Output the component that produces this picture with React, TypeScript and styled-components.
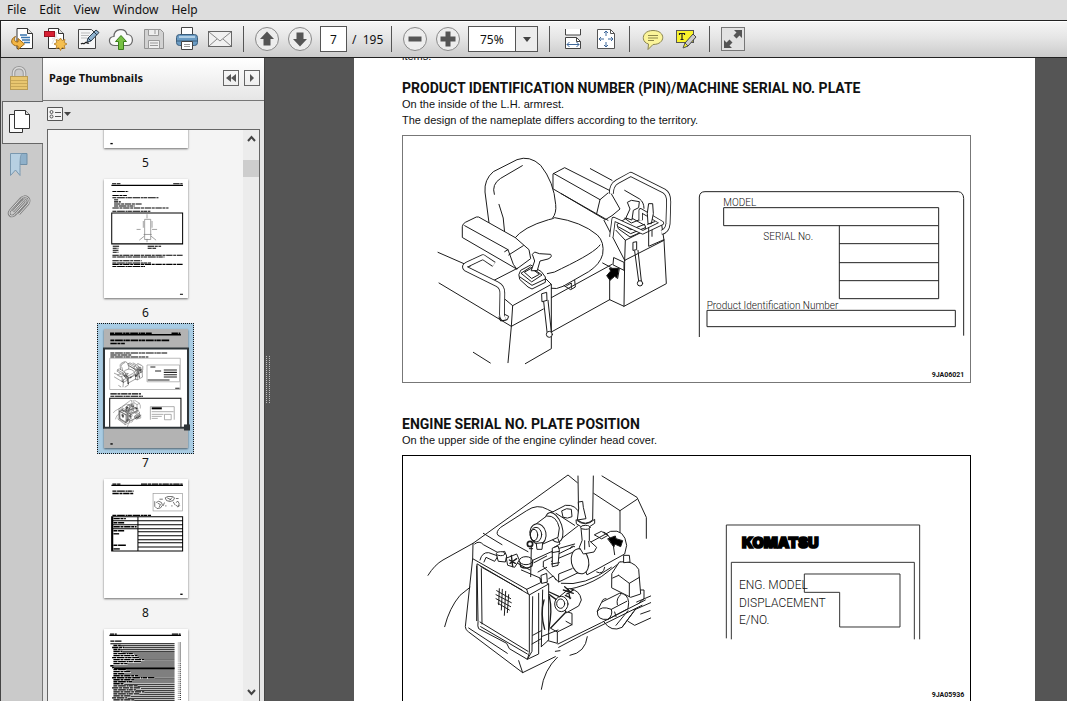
import React, { useLayoutEffect, useRef } from "react";
import styled, { createGlobalStyle, css } from "styled-components";

const GlobalStyle = createGlobalStyle`
  * { box-sizing: border-box; }
  html, body, #root { height: 100%; }
  body { margin: 0; overflow: hidden; font-family: "Noto Sans", "Open Sans", sans-serif; font-size: 12px; color: #111; }
  button, input, select { font: inherit; color: inherit; }
  button { background: none; border: 0; padding: 0; cursor: default; }
`;

const Window = styled.div`
  height: 100%;
  display: flex;
  flex-direction: column;
  background: #dcdcdc;
`;

const MenuBar = styled.nav`
  flex: none;
  display: flex;
  height: 20px;
  padding-left: 1px;
  background: #dddddd;
`;

const MenuItem = styled.button`
  padding: 0 7px 0 6px;
  line-height: 20px;
`;

const Toolbar = styled.div`
  flex: none;
  display: flex;
  align-items: center;
  height: 38px;
  padding-left: 4px;
  border: 1px solid #222;
  border-width: 1px 0 1px 1px;
  background: linear-gradient(#f6f6f6, #e6e6e6 45%, #cbcbcb);
  box-shadow: inset 0 1px #fff;
`;

const ToolButton = styled.button`
  flex: none;
  width: 33px;
  height: 30px;
  display: grid;
  place-items: center;
`;

const Separator = styled.span`
  flex: none;
  width: 1px;
  height: 26px;
  margin: 0 6px 0 7px;
  background: #555;
`;

const fieldFrame = css`
  flex: none;
  height: 26px;
  margin: 0 4px;
  border: 1px solid #555;
  background: #fff;
`;

const PageInput = styled.input`
  ${fieldFrame}
  width: 27px;
  padding: 0;
  border-radius: 0;
  text-align: center;
`;

const PageCount = styled.span`
  width: 33px;
  padding-left: 1px;
  white-space: pre;
`;

const ZoomField = styled.label`
  ${fieldFrame}
  width: 70px;
  display: flex;
  align-items: stretch;
`;

const ZoomSelect = styled.select`
  flex: 1;
  min-width: 0;
  padding: 0 0 0 11px;
  border: 0;
  border-radius: 0;
  appearance: none;
  background: transparent;
`;

const ZoomArrow = styled.span`
  width: 22px;
  display: grid;
  place-items: center;
  border-left: 1px solid #555;
  background: #ececec;
  pointer-events: none;
`;

const Workspace = styled.div`
  flex: 1;
  min-height: 0;
  display: flex;
  border-left: 1px solid #444;
`;

const Rail = styled.div`
  flex: none;
  width: 42px;
  display: flex;
  flex-direction: column;
  background: #cacaca;
  border-right: 1px solid #777;
`;

const RailTab = styled.button<{ $active?: boolean }>`
  flex: none;
  height: 43px;
  padding: 0 5px 3px 0;
  display: grid;
  place-items: center;
  ${(p) =>
    p.$active &&
    css`
      margin: 0 -1px 0 1px;
      padding-right: 7px;
      background: #e6e6e6;
      border: 1px solid #666;
      border-right: 0;
    `}
`;

const SidePanel = styled.aside`
  flex: none;
  width: 221px;
  display: flex;
  flex-direction: column;
  background: #e5e5e5;
`;

const PanelHeader = styled.header`
  flex: none;
  display: flex;
  align-items: center;
  gap: 5px;
  height: 43px;
  padding: 0 4px 3px 6px;
  border-bottom: 1px solid #777;
  background: linear-gradient(#fff, #e6e6e6);
`;

const PanelTitle = styled.h2`
  flex: 1;
  margin: 0;
  font-size: 11px;
  font-weight: 700;
  white-space: nowrap;
`;

const SquareButton = styled.button`
  width: 16px;
  height: 16px;
  display: grid;
  place-items: center;
  border: 1px solid #666;
`;

const PanelTools = styled.div`
  flex: none;
  height: 28px;
  padding: 6px 4px;
`;

const ThumbArea = styled.div`
  flex: 1;
  min-height: 0;
  display: flex;
  margin: 0 4px;
  border: 1px solid #666;
  border-bottom: 0;
  background: #f4f4f4;
`;

const ThumbList = styled.div`
  flex: 1;
  overflow: hidden;
`;

const ThumbItem = styled.div`
  display: flex;
  flex-direction: column;
  align-items: center;
`;

const ThumbFrame = styled.button<{ $selected?: boolean }>`
  width: 97px;
  height: 131px;
  display: grid;
  place-items: center;
  border: 1px dotted transparent;
  ${(p) => p.$selected && css`background: #a9cce3; border-color: #111;`}
`;

const Paper = styled.svg`
  width: 84px;
  height: 119px;
  overflow: visible;
  background: #fff;
  box-shadow: 0 1px 2px rgba(0, 0, 0, 0.55);
`;

const ThumbLabel = styled.span`
  height: 19px;
  line-height: 17px;
`;

const ScrollBar = styled.div`
  flex: none;
  width: 16px;
  display: flex;
  flex-direction: column;
  align-items: center;
  background: #ececec;
`;

const ScrollArrow = styled.button`
  width: 16px;
  height: 17px;
  display: grid;
  place-items: center;
`;

const ScrollTrack = styled.div`
  flex: 1;
  width: 16px;
  padding-top: 13px;
`;

const ScrollThumb = styled.div`
  height: 17px;
  background: #cdcdcd;
`;

const Splitter = styled.div`
  flex: none;
  width: 7px;
  display: grid;
  align-items: center;
  justify-items: center;
  background: #555;
  border-left: 1px solid #444;
`;

const Reader = styled.main`
  flex: 1;
  min-width: 0;
  overflow: hidden;
  padding: 0 32px 0 83px;
  background: #555;
`;

const Sheet = styled.article`
  padding: 100px 64px 60px 48px;
  background: #fff;
  font-family: Roboto, "Liberation Sans", Arial, sans-serif;
`;

const Paragraph = styled.p`
  margin: 0;
  font-size: 12px;
  font-family: "Liberation Sans", Arial, sans-serif;
  font-size: 11px;
  line-height: 16px;
  color: #111;
`;

const Heading = styled.h1`
  margin: 16px 0 0;
  font-size: 14px;
  line-height: 16px;
  font-weight: 700;
  white-space: nowrap;
`;

const Figure = styled.figure<{ $tone: string }>`
  margin: 7px 0 33px;
  border: 1px solid ${(p) => p.$tone};
  svg { display: block; width: 100%; height: auto; }
`;

const Drawing = styled.g<{ $weight: number }>`
  fill: none;
  stroke: #1c1c1c;
  stroke-width: ${(p) => p.$weight};
  stroke-linejoin: round;
  stroke-linecap: round;
  .w { fill: #fff; }
  .k { fill: #000; }
`;

const PlateText = styled.text<{ $size: number; $bold?: boolean }>`
  font-family: Roboto, "Liberation Sans", sans-serif;
  font-size: ${(p) => p.$size}px;
  font-weight: ${(p) => (p.$bold ? 700 : 300)};
  fill: #111;
`;

const Wordmark = styled.text`
  font-family: Inter, sans-serif;
  font-size: 44px;
  font-weight: 900;
  fill: #000;
  stroke: #000;
  stroke-width: 5;
`;

const Tube = ({ d, w = 15 }: { d: string; w?: number }) => (
  <>
    <path d={d} strokeWidth={w} strokeLinecap="butt" />
    <path d={d} strokeWidth={w - 5} stroke="#fff" strokeLinecap="butt" />
  </>
);

/* ---------- toolbar icons ---------- */

const Icon = ({ children, size = 26 }: { children: React.ReactNode; size?: number }) => (
  <svg width={size} height={size} viewBox={`0 0 ${size} ${size}`} fill="none" aria-hidden="true">
    {children}
  </svg>
);

const OpenIcon = () => (
  <Icon>
    <path d="M8 2.5h10.500l5 5v15H8z" fill="#fff" stroke="#333" />
    <path d="M18.500 2.500v5h5" fill="#ddd" stroke="#333" />
    <path d="M11 9h7M12 11.500h9M13 14h8M15 16.500h6" stroke="#3a76b0" strokeWidth="1.300" />
    <path d="M6.500 10.500C1 12.500 1 20 9 20v3.500l6.500-5.500L9 12.500V16c-4 0-4.500-3-2.500-5.500z" fill="#f2b544" stroke="#9a6716" />
  </Icon>
);
const CreateIcon = () => (
  <Icon>
    <path d="M6.500 2.500h10l5 5v15h-15z" fill="#fff" stroke="#333" />
    <path d="M16.500 2.500v5h5" fill="#ddd" stroke="#333" />
    <path d="M10 13c4-1 5-5 4-7-1 5 2 8 6 8M10 18l4-8" stroke="#ddd" />
    <rect x="2.500" y="5.500" width="10" height="5" fill="#d81f33" stroke="#9b1220" />
    <path d="m18.500 12 1.500 2.500 3-1-.8 3 2.800 1.500-2.800 1.500.8 3-3-.8-1.500 2.800-1.500-2.800-3 .8.800-3L12 18l2.800-1.500-.8-3 3 1z" fill="#f5bf4f" stroke="#b0791f" strokeWidth=".8" />
  </Icon>
);
const SignIcon = () => (
  <Icon>
    <path d="M3.500 3.500h13l4 4v15h-17z" fill="#f6f6f6" stroke="#444" />
    <path d="M6 7h9M6 9.500h8M6 12h6" stroke="#bbb" />
    <path d="M6 18c2-2 3 1 4-1s2 1 4 0" stroke="#222" strokeWidth="1.300" />
    <path d="m12 16 1-4 8-8 3 2.500-8 8.500z" fill="#8fb2cf" stroke="#2c3c4b" />
    <path d="m13 12 3 3M19 6l3 3" stroke="#2c3c4b" />
  </Icon>
);
const CloudIcon = () => (
  <Icon>
    <path d="M7 19.500c-7 0-7.500-9-1-9 0-8 11-9.500 13-2 7 0 7.500 11 0 11z" fill="#fafafa" stroke="#666" strokeWidth="1.200" />
    <path d="m13 9.500 5.500 6H15.500v8h-5v-8H7.500z" fill="#78c043" stroke="#3b7f1b" />
  </Icon>
);
const SaveIcon = () => (
  <Icon>
    <path d="M3.500 3.500h16l3 3v16h-19z" fill="#d2d2d2" stroke="#929292" />
    <path d="M7.500 3.500h10v6h-10zM7.500 14.500h11v8h-11z" fill="#eee" stroke="#999" />
    <path d="M14 4v4M9 17h8M9 19.500h8" stroke="#999" />
  </Icon>
);
const PrintIcon = () => (
  <Icon>
    <path d="M7.500 9V1.500h11V9" fill="#fff" stroke="#444" />
    <rect x="2.500" y="8.500" width="21" height="11" rx="3" fill="#6b9cc4" stroke="#3d5f7d" />
    <path d="M3 15h20" stroke="#3d5f7d" />
    <path d="M5 11h16" stroke="#b2d0e6" strokeWidth="2" />
    <path d="M7.500 15.500h11v8h-11z" fill="#fff" stroke="#444" />
    <path d="M10 18.500h6M10 20.500h6" stroke="#999" />
  </Icon>
);
const MailIcon = () => (
  <Icon>
    <rect x="1.500" y="5.500" width="23" height="15" fill="#f1f1f1" stroke="#666" />
    <path d="m2 6 11 9 11-9M2 20l8-7M24 20l-8-7" stroke="#888" />
  </Icon>
);
const RoundIcon = ({ d }: { d: string }) => (
  <Icon>
    <circle cx="13" cy="13" r="11.500" fill="#ededed" stroke="#888" />
    <path d={d} fill="#555" />
  </Icon>
);
const FitWidthIcon = () => (
  <Icon>
    <path d="M5.500 3v6h15V3" fill="#fff" stroke="#444" />
    <path d="M5.500 22.500v-11h11l4 4v7z" fill="#fff" stroke="#444" />
    <path d="M16.500 11.500v4h4" stroke="#444" />
    <path d="M7 18.500h12M9.500 16 7 18.500 9.500 21M16.500 16l2.500 2.500-2.500 2.500" stroke="#3f689a" />
  </Icon>
);
const FitPageIcon = () => (
  <Icon>
    <path d="M4.500 3.500h13l4 4v15h-17z" fill="#fff" stroke="#555" />
    <path d="M17.500 3.500v4h4" stroke="#555" />
    <path d="M13 5v5M13 16v5M6 13h5M15 13h5M11 7l2-2 2 2M11 19l2 2 2-2M8 11l-2 2 2 2M18 11l2 2-2 2" stroke="#3f689a" />
  </Icon>
);
const CommentIcon = () => (
  <Icon>
    <path d="M13 4.500c13 0 13 14 0 14l-5 5 .500-5.500C.500 16 1.500 4.500 13 4.500z" fill="#fbf49a" stroke="#8a8550" />
    <path d="M8 9.500h10M8 12h10M8 14.500h6" stroke="#8d874b" />
  </Icon>
);
const HighlightIcon = () => (
  <Icon>
    <rect x="3.500" y="4.500" width="17" height="12" fill="#f9f32c" stroke="#555" />
    <path d="M6 7.500h6M9 7.500v6M7.500 13.500h3M6.500 7v2M11.500 7v2" stroke="#222" strokeWidth="1.200" />
    <path d="m11 21 1-4 8-9 3 3-8 9z" fill="#ccc" stroke="#444" />
    <path d="m10 22 2-5 3 3z" fill="#f9f32c" stroke="#555" />
  </Icon>
);
const ExpandIcon = () => (
  <Icon>
    <rect x="1.500" y="1.500" width="23" height="23" fill="#e2e2e2" stroke="#777" />
    <path d="M22 4v8l-2.500-2.500-3 3-3-3 3-3L14 4zM4 22v-8l2.500 2.500 3-3 3 3-3 3L12 22z" fill="#555" />
  </Icon>
);

/* ---------- rail icons ---------- */

const LockIcon = () => (
  <Icon>
    <path d="M7.500 12V8c0-7 11-7 11 0v4" stroke="#999" strokeWidth="3.500" />
    <path d="M7.500 12V8c0-7 11-7 11 0v4" stroke="#ddd" strokeWidth="1.500" />
    <rect x="4.500" y="11.500" width="17" height="13" fill="#e8c66f" stroke="#b99c56" />
    <path d="M5 15.500h16M5 18.500h16M5 21.500h16" stroke="#c9a857" />
  </Icon>
);
const PagesIcon = () => (
  <Icon>
    <path d="M2.500 6.500h13v18h-13z" fill="#fafafa" stroke="#333" />
    <path d="M7.500 2.500h11l4 4v14h-15z" fill="#fff" stroke="#333" />
    <path d="M18.500 2.500v4h4" fill="#ddd" stroke="#333" />
  </Icon>
);
const BookmarkIcon = () => (
  <Icon>
    <path d="M13 2.500h8v11h-7z" fill="#8fb0c9" stroke="#6f8fa6" />
    <path d="M4.500 24.500V2.500H16c-2 2-2 6-2 22L9.500 19z" fill="#b7d0e2" stroke="#7a98af" />
  </Icon>
);
const ClipIcon = () => (
  <Icon>
    <path d="M7 17.500 17 6.500c2-2 4 .500 2.500 2.500L9 20.500C5 24.500 1 20 4.500 16L15 4.500c4-4.500 11 0 7 5.500l-9 10" stroke="#808080" strokeWidth="2.600" />
    <path d="M7 17.500 17 6.500c2-2 4 .500 2.500 2.500L9 20.500C5 24.500 1 20 4.500 16L15 4.500c4-4.500 11 0 7 5.500l-9 10" stroke="#ddd" />
  </Icon>
);

/* ---------- thumbnails ---------- */

/* Each row: x start, x end, y. Rows are drawn as broken bars that read as tiny words. */
type Row = [number, number, number];
const Rows = ({ rows, w = 4 }: { rows: Row[]; w?: number }) => (
  <g stroke="#000" strokeWidth={w}>
    {rows.map(([a, b, y], i) => (
      <path key={i} d={`M${a} ${y}H${b}`} strokeDasharray={i % 2 ? "19 2 9 2" : "12 2 23 2 6 1"} />
    ))}
  </g>
);

const Thumb5 = () => <Rows rows={[[19, 26, 341]]} />;

const Thumb6 = () => (
  <>
    <path d="M22 19H235" stroke="#000" strokeWidth="4" />
    <Rows rows={[[24, 49, 14], [206, 234, 14], [25, 72, 37], [25, 68, 49], [25, 162, 56], [30, 42, 62], [30, 50, 68], [30, 112, 74], [30, 92, 80], [25, 192, 86], [25, 138, 96], [26, 46, 200], [26, 43, 206], [26, 43, 212], [26, 43, 218], [130, 170, 200], [130, 155, 206], [25, 234, 227], [25, 180, 232], [25, 112, 243], [25, 140, 250], [25, 234, 254], [25, 122, 260], [226, 235, 343]]} w={3} />
    <path d="M23 101H234V193H23Z" fill="none" stroke="#000" strokeWidth="3" />
    <path d="M121 120h18v60h-18zM117 125v20M143 125v20M97 150h12M143 150h15M105 182l15-12M155 182l-15-12M128 105v12M128 188v-10M118 165h24" fill="none" stroke="#777" strokeWidth="2" />
  </>
);

const Thumb7 = () => (
  <>
    <path d="M0 0H250V58H0ZM0 296H250V354H0Z" fill="#b3b3b3" />
    <path d="M18 17H229" stroke="#000" strokeWidth="4" />
    <Rows rows={[[18, 142, 13], [201, 227, 13], [19, 196, 34], [19, 62, 43]]} w={5} />
    <Rows rows={[[19, 188, 71], [19, 82, 77], [19, 132, 83], [19, 110, 193], [19, 116, 200]]} w={3} />
    <path d="M17 87H227V180H17ZM128 107H225V157H128Z" fill="#fff" stroke="#999" strokeWidth="2" />
    <path d="M178 122h39M178 129h39M178 136h39M178 143h39M138 113h15M152 125h18M130 152h65M212 176h13" stroke="#222" strokeWidth="3" />
    <path d="M17 293V206H229V293" fill="none" stroke="#000" strokeWidth="3" />
    <path d="M138 270V231H209V270M142 246h65M142 254h35M142 260h30M142 266h18M180 254h20v16h-20z" fill="none" stroke="#888" strokeWidth="2" />
    <path d="M142 236h30" stroke="#000" strokeWidth="6" />
    <g transform="translate(15 87) scale(0.122)"><SeatLines weight={10} /></g>
    <g transform="translate(16 203) scale(0.122)"><EngineLines weight={8} /></g>
    <path d="M0 58H250V294H0Z" fill="none" stroke="#2d3438" strokeWidth="6" />
    <path d="M238 284h18v18h-18z" fill="#2d3438" />
    <Rows rows={[[19, 26, 342]]} />
  </>
);

const Thumb8 = () => (
  <>
    <path d="M22 19H235" stroke="#000" strokeWidth="4" />
    <Rows rows={[[25, 49, 15], [110, 234, 15], [25, 88, 36], [25, 88, 43], [25, 140, 108], [28, 65, 118], [28, 60, 130], [28, 97, 142], [28, 60, 154], [28, 45, 163], [28, 65, 197], [28, 48, 208], [227, 234, 343]]} w={4} />
    <path d="M23 112H234V214H23ZM101 112V214M101 124H234M101 136H234M101 148H234M101 157H234M101 169H234M101 181H234M101 190H234M101 202H234M23 124H101M23 136H101M23 148H101" fill="none" stroke="#000" strokeWidth="3" />
    <path d="M25 112V214" stroke="#000" strokeWidth="5" />
    <rect x="146" y="43" width="88" height="52" fill="#fff" stroke="#999" strokeWidth="2" />
    <path d="M151 66v16M155 70l8-4 8 4 3 8-6 8-10 2-6-6M160 72l8 4-4 8M182 56l8-4h14l6 4-4 8-10 3-10-3zM188 56l12 6M204 54l-10 10M180 70l-4 10M206 68l6 10M214 70l6-4 4 8-4 8-6-4M220 84l6-6M182 80h4M200 80h4M165 60h10M214 58h8" fill="none" stroke="#333" strokeWidth="2" />
  </>
);

const contentsStarts = [50, 60, 48, 55, 90, 100, 104, 120, 110, 70, 19, 30, 66, 80, 60, 102, 150, 90, 84, 60, 100, 110, 95, 120, 105, 80, 70, 90];

const Thumb9 = () => (
  <>
    <path d="M16 19H229" stroke="#000" strokeWidth="4" />
    <Rows rows={[[18, 38, 15], [202, 228, 15], [19, 52, 36]]} />
    <path d="M19 44H210" stroke="#000" strokeWidth="3" />
    <Rows rows={contentsStarts.map((x, i): Row => [i % 5 === 1 ? 24 : 28, x, 49 + i * 6])} w={4} />
    <g stroke="#000" strokeWidth="3">
      {contentsStarts.map((x, i) => <path key={i} d={`M${x} ${50 + i * 6}H210`} />)}
    </g>
    <path d="M227 40V220" stroke="#333" strokeWidth="4" strokeDasharray="3 3" />
    <path d="M222 40V220" stroke="#aaa" strokeWidth="5" strokeDasharray="3 3" />
    <path d="M30 117H210" stroke="#000" strokeWidth="5" />
  </>
);

const thumbs = [
  { n: 5, art: <Thumb5 /> },
  { n: 6, art: <Thumb6 /> },
  { n: 7, art: <Thumb7 /> },
  { n: 8, art: <Thumb8 /> },
  { n: 9, art: <Thumb9 /> },
];

/* ---------- figure drawings ---------- */

function SeatLines({ weight = 3 }: { weight?: number }) {
  return (
    <Drawing $weight={weight}>
      {/* back rest and cushion */}
      <path d="M283 278 L271 185 Q268 148 296 124 L367 88 Q405 74 438 105 Q478 155 483 222 Q486 248 474 263" />
      <path d="M299 192 Q290 162 318 144 L383 106 M313 222 Q330 262 330 306" />
      <path d="M358 326 Q385 290 462 268 Q474 266 480 262 Q560 274 608 314 Q630 335 624 372 Q616 402 582 424 L505 468 Q485 478 470 474" />
      <path d="M616 344 Q602 366 500 415 Q480 428 458 430" />
      {/* left arm rest */}
      <path className="w" d="M203 288 Q204 280 212 276 L245 260 L252 260 L362 322 L403 358 L408 385 L366 416 L204 322 Z" />
      <path d="M210 286 L340 358 L356 402 L366 416 M342 374 L386 346 M340 358 L330 364" />
      {/* left console */}
      <path d="M130 366 L226 408 M133 458 L350 588 M298 450 L368 414" />
      <path d="M330 506 L354 526 L350 588 L340 697 M354 526 L470 462 L470 655 L392 700 M350 588 L446 536 M236 666 L287 698 M448 440 L470 462" />
      <Tube d="M298 402 L265 380 L218 402 Q206 408 214 415 L308 462 Q324 470 323 490 L322 552 Q322 568 332 562" w={17} />
      <path d="M330 552 L342 558 L338 568 L318 572 L313 560" />
      <path className="w" d="M373 432 L378 420 L408 404 L440 424 L452 440 L452 456 L412 476 L400 470 L376 448 Z" />
      <path className="w" d="M380 428 L408 410 L442 434 L412 454 Z" />
      <path d="M376 440 L412 465 L452 446 M390 425 L410 414 L434 432 L412 444 Z" />
      <path className="w" d="M410 420 L420 392 L413 372 L420 365 L434 370 L468 372 Q474 380 460 386 L436 392 L428 420 Z" />
      <path d="M442 490 L456 486 L457 510 L443 514 Z M447 514 L457 604 M460 510 L470 604" />
      <circle className="w" cx="464" cy="612" r="9" />
      {/* floor */}
      <path d="M470 502 L652 402 M470 605 L645 508 M645 508 L645 446 M508 466 L528 478 L542 470 L540 450 M516 466 L530 458 L530 474 M624 398 L650 412" />
      {/* right arm rest */}
      <path className="w" d="M476 130 L510 112 L644 180 L676 236 L652 256 L632 268 L476 176 Z" />
      <path d="M478 130 L616 208 L640 188 M616 208 L606 250" />
      <path d="M587 115 L652 150 M500 190 L640 270 M628 270 L690 390 M690 180 L735 206 Q748 216 748 234" />
      {/* right console */}
      <path d="M690 390 L688 528 L645 508 M690 390 L808 330 L815 460 L688 528 M664 300 L692 330 L690 390 M692 330 L800 276 L808 330" />
      <path className="w" d="M658 382 L688 396 L688 420 L656 404 Z" />
      <Tube d="M650 190 Q650 164 668 154 L708 132 L808 182 Q822 190 822 214 L820 280 Q818 302 800 306" w={15} />
      <path className="w" d="M668 282 L702 258 L752 286 L752 300 L706 320 L672 296 Z" />
      <path d="M676 276 L708 298 L750 282 M672 290 L708 310 L752 292 M690 264 L710 278 L735 268" />
      <path className="w" d="M694 262 L706 236 L698 216 L710 210 L734 214 L732 232 L716 240 L712 268 Z" />
      <Tube d="M650 320 L657 266 L744 306 L802 278 L738 240 L738 270" w={13} />
      <path className="w" d="M763 220 L774 220 L776 250 L770 280 L760 280 L758 250 Z" />
      <path d="M762 292 L762 348 L808 328 M772 300 L772 318 M758 282 L780 274" />
      <path d="M716 336 L726 334 L726 358 L716 360 Z M720 362 L732 452 M730 360 L740 452" />
      <circle className="w" cx="736" cy="459" r="8" />
      <path className="k" d="M673 414 L644 414 L648 422 L636 436 L646 450 L660 438 L668 444 Z" />
    </Drawing>
  );
}

function EngineLines({ weight = 3 }: { weight?: number }) {
  return (
    <Drawing $weight={weight}>
      {/* hood outline */}
      <path d="M100 376 Q120 344 145 330 L235 280 L520 75 L548 98 M597 130 L676 182 L676 252 M676 182 L727 148 M622 78 L727 142 L755 202 L755 265" />
      <path d="M150 530 Q164 474 196 436 L226 412 M440 718 Q448 660 488 622" />
      <path d="M400 305 L310 256 Q302 246 318 232 L396 182 Q428 160 458 178 L486 192 M266 250 L322 284" />
      {/* shell around the radiator */}
      <path d="M235 280 L234 326 L212 530 Q212 540 222 546 L384 668 L482 620 M234 326 L396 418 M240 282 Q254 270 266 284 L406 360 M222 534 L338 610 M372 632 L384 668" />
      <path d="M396 418 L438 398 L436 384 L380 360 M396 418 L402 436 L462 402 L436 386" />
      <path className="w" d="M248 342 L404 434 L404 608 L398 628 L344 596 L336 580 L252 536 Q248 530 250 516 Z" />
      <path d="M260 356 L262 522 M258 350 L382 420 M256 516 L400 604 M258 530 L398 612 M246 348 L246 512" />
      <path d="M414 440 L412 604 L398 628 L432 612 L432 580 M432 430 L432 580 M444 420 L440 590 M414 556 L440 542 M412 582 L440 566 M462 402 L462 570 L440 590 M440 560 L490 540" />
      <path d="M306 422 L348 446 M304 434 L350 458 M304 446 L348 470 M310 460 L344 480 M314 416 L312 464 M323 418 L320 480 M333 424 L329 496 M342 434 L338 488" />
      {/* hoses over the radiator */}
      <path className="w" d="M256 330 Q262 306 282 308 L310 318 L300 334 L274 322 L268 336" />
      <path className="w" d="M306 312 L330 304 L336 318 L332 336 L312 334 Z M336 324 L366 312 L374 330 L360 352 L340 346 Z" />
      <ellipse className="w" cx="318" cy="311" rx="13" ry="6" />
      <ellipse className="w" cx="394" cy="332" rx="20" ry="12" />
      <path d="M376 338 L378 350 Q394 360 412 348 L414 334 M344 330 L362 340 M346 340 L366 326 M350 316 L354 350" strokeWidth="4" />
      <circle cx="406" cy="282" r="8" strokeWidth="5" />
      <path d="M410 292 L408 380 M404 296 L414 296 M416 330 L490 296 L540 282 M418 338 L456 318" />
      {/* air cleaner */}
      <path className="w" d="M466 190 L512 166 Q546 162 556 196 L552 226 L498 268 Z" />
      <path className="w" d="M502 182 Q516 172 530 178 L532 200 Q518 208 506 202 Z M484 190 L540 226" />
      <ellipse className="w" cx="478" cy="232" rx="24" ry="46" transform="rotate(-18 478 232)" />
      <path className="w" d="M424 222 L456 198 Q486 196 494 234 L490 262 L440 284 Z" />
      <ellipse className="w" cx="430" cy="252" rx="24" ry="31" transform="rotate(-12 430 252)" />
      <ellipse cx="424" cy="254" rx="17" ry="22" />
      <ellipse cx="418" cy="255" rx="11" ry="17" />
      <path className="w" d="M426 280 L444 278 L442 298 L428 298 Z" />
      <path d="M490 266 L496 282 L478 292" />
      {/* exhaust */}
      <path className="w" d="M550 78 L552 212 Q572 228 594 210 L596 78" />
      <path className="w" d="M545 210 Q572 234 600 208 L600 220 Q572 244 546 222 Z" />
      <path className="w" d="M552 156 L564 154 L566 172 L574 206 L548 210 L552 176 Z" />
      {/* valve cover */}
      <path d="M446 350 L492 396 L660 316 M446 350 L446 334 L536 290 M470 334 L536 306 M492 396 L492 372 L532 356 M430 366 L456 352" />
      <path className="w" d="M474 294 L490 288 L494 300 L490 346 L474 350 Z" />
      <path d="M470 342 L494 338 M472 308 L494 304 M526 296 Q532 284 540 290" />
      {/* muffler */}
      <path className="w" d="M552 296 L648 244 Q690 236 696 286 L690 312 L578 374 Z" />
      <ellipse className="w" cx="556" cy="334" rx="26" ry="38" transform="rotate(-12 556 334)" />
      <path d="M628 246 Q656 260 660 314 M606 366 Q626 376 630 352 M600 254 L620 244 L640 256 L622 266 Z" />
      <path className="w" d="M560 232 L584 230 L584 272 L606 292 L598 306 L566 312 L554 292 L562 272 Z" />
      <ellipse className="w" cx="572" cy="232" rx="14" ry="6" />
      <path d="M570 272 L570 298 M582 274 L584 290" />
      {/* block, right side */}
      <path d="M520 418 Q570 410 620 380 L678 336 M500 400 Q570 410 650 352" />
      <path className="w" d="M652 370 L674 336 Q716 330 732 358 L738 432 L708 442 L652 414 Z" />
      <path d="M672 376 L704 400 L734 382 M704 400 L704 440 M654 384 L672 376" />
      <path className="w" d="M688 316 L704 316 L706 336 L688 338 Z" />
      <path d="M738 420 L748 420 L748 446 L730 462 M726 456 L768 438 M718 480 L768 458 M700 514 L720 526 L768 504 M766 482 L738 492" />
      {/* starter */}
      <path className="w" d="M622 456 L674 430 Q700 430 702 458 L700 476 L640 508 Q606 512 608 484 Z" />
      <path d="M608 484 Q620 466 650 478 L696 454 M650 478 Q656 496 640 508 M622 456 Q622 446 634 446 M660 486 L664 500 M678 434 Q664 444 668 464" />
      <path d="M490 582 L620 518 L752 450 M492 592 L560 556 L742 466 M628 516 Q650 548 682 532 L724 476 M664 526 L700 482 M682 532 L716 486" />
      <path d="M526 616 Q572 608 578 560 M482 604 L496 602 M460 572 L488 580 L488 546 L532 524 L532 490 L512 484 M488 546 L470 536 M532 524 L514 514" />
      {/* pulleys and belt */}
      <path className="w" d="M494 440 L524 416 Q556 420 560 450 L552 468 L516 488 Z" />
      <ellipse className="w" cx="500" cy="462" rx="20" ry="23" />
      <ellipse cx="498" cy="461" rx="12" ry="14" />
      <path d="M464 426 L494 440 M464 434 L484 448 M468 534 L514 486 M464 440 Q474 480 462 540 M448 450 Q436 490 450 538" strokeWidth="4" />
      <path d="M510 410 L530 428 M506 420 L536 430 M516 432 L536 420 M520 416 L526 446 M512 436 L528 444" strokeWidth="4" />
      <path className="w" d="M440 376 L456 370 L458 396 L442 400 Z M462 386 L476 378 L484 390" />
      <path className="k" d="M640 266 L662 258 L664 266 L684 272 L678 290 L660 282 L658 290 Z" />
    </Drawing>
  );
}

const SeatFigure = () => (
  <svg viewBox="25 17 1701 738" role="img" aria-label="Location of the machine serial number plate">
    <SeatLines />
    <g transform="translate(885 150)">
      <g fill="none" stroke="#222" strokeWidth="3">
        <path d="M29 470V50Q30 34 46 34H806Q821 36 822 54V466" />
        <path d="M102 82H747V136H102Z M449 136V355H747V136 M449 190H747 M449 247H747 M449 301H747 M52 390H797V439H52Z" />
      </g>
      <PlateText x="101" y="78" $size={30}>MODEL</PlateText>
      <PlateText x="221" y="178" $size={30}>SERIAL No.</PlateText>
      <PlateText x="51" y="385" $size={30}>Product Identification Number</PlateText>
      <PlateText x="726" y="590" $size={21} $bold>9JA06021</PlateText>
    </g>
  </svg>
);

const EngineFigure = () => (
  <svg viewBox="25 18 1701 760" role="img" aria-label="Location of the engine serial number plate">
    <EngineLines />
    <g transform="translate(915 150)">
      <g fill="none" stroke="#333" strokeWidth="3">
        <path d="M80 415V75H660V418 M95 418V187H644V418" />
        <path d="M314 222H601V381H420V277H314Z" />
      </g>
      <Wordmark x="127" y="143">KOMATSU</Wordmark>
      <PlateText x="118" y="268" $size={36}>ENG. MODEL</PlateText>
      <PlateText x="118" y="320" $size={36}>DISPLACEMENT</PlateText>
      <PlateText x="118" y="372" $size={36}>E/NO.</PlateText>
      <PlateText x="696" y="591" $size={21} $bold>9JA05936</PlateText>
    </g>
  </svg>
);

function useInitialScroll(top: number) {
  const ref = useRef<HTMLDivElement>(null);
  useLayoutEffect(() => {
    if (ref.current) ref.current.scrollTop = top;
  }, [top]);
  return ref;
}

const fileTools: [string, React.ReactNode][] = [
  ["Open", <OpenIcon />],
  ["Create PDF", <CreateIcon />],
  ["Sign", <SignIcon />],
  ["Upload", <CloudIcon />],
  ["Save", <SaveIcon />],
  ["Print", <PrintIcon />],
  ["E-mail", <MailIcon />],
];

const Tool = ({ label, children }: { label: string; children: React.ReactNode }) => (
  <ToolButton type="button" aria-label={label}>{children}</ToolButton>
);

export default function App() {
  const listRef = useInitialScroll(107);
  const readerRef = useInitialScroll(110);

  return (
    <Window>
      <GlobalStyle />
      <MenuBar>
        {["File", "Edit", "View", "Window", "Help"].map((m) => (
          <MenuItem key={m} type="button">{m}</MenuItem>
        ))}
      </MenuBar>

      <Toolbar>
        {fileTools.map(([label, icon]) => <Tool key={label} label={label}>{icon}</Tool>)}
        <Separator />
        <Tool label="Previous page"><RoundIcon d="M13 5.500 20 13h-3.500v6.500h-7V13H6z" /></Tool>
        <Tool label="Next page"><RoundIcon d="M13 20.500 20 13h-3.500V6.500h-7V13H6z" /></Tool>
        <PageInput aria-label="Page number" defaultValue="7" />
        <PageCount>/  195</PageCount>
        <Separator />
        <Tool label="Zoom out"><RoundIcon d="M6.500 10.500h13v5h-13z" /></Tool>
        <Tool label="Zoom in"><RoundIcon d="M10.500 5.500h5v5h5v5h-5v5h-5v-5h-5v-5h5z" /></Tool>
        <ZoomField>
          <ZoomSelect aria-label="Zoom level" defaultValue="75%">
            <option>75%</option>
            <option>100%</option>
          </ZoomSelect>
          <ZoomArrow><svg width="8" height="5"><path d="M0 0h8L4 5z" fill="#444" /></svg></ZoomArrow>
        </ZoomField>
        <Separator />
        <Tool label="Fit width"><FitWidthIcon /></Tool>
        <Tool label="Fit page"><FitPageIcon /></Tool>
        <Separator />
        <Tool label="Add comment"><CommentIcon /></Tool>
        <Tool label="Highlight text"><HighlightIcon /></Tool>
        <Separator />
        <Tool label="Read mode"><ExpandIcon /></Tool>
      </Toolbar>

      <Workspace>
        <Rail>
          <RailTab type="button" aria-label="Security"><LockIcon /></RailTab>
          <RailTab type="button" aria-label="Page thumbnails" $active><PagesIcon /></RailTab>
          <RailTab type="button" aria-label="Bookmarks"><BookmarkIcon /></RailTab>
          <RailTab type="button" aria-label="Attachments"><ClipIcon /></RailTab>
        </Rail>

        <SidePanel>
          <PanelHeader>
            <PanelTitle>Page Thumbnails</PanelTitle>
            <SquareButton type="button" aria-label="Collapse">
              <svg width="10" height="8"><path d="M5 0v8L0 4zM10 0v8L5 4z" fill="#555" /></svg>
            </SquareButton>
            <SquareButton type="button" aria-label="Expand">
              <svg width="6" height="8"><path d="M1 0v8l4-4z" fill="#555" /></svg>
            </SquareButton>
          </PanelHeader>
          <PanelTools>
            <button type="button" aria-label="Options">
              <svg width="24" height="15" fill="none" stroke="#555">
                <path d="M.5.5h15v13H.5z" fill="#f4f4f4" />
                <circle cx="4.500" cy="5" r="1.500" />
                <circle cx="4.500" cy="9.500" r="1.500" />
                <path d="M8 5.500h6M8 9.500h6" />
                <path d="M17 5h7l-3.500 4z" fill="#444" stroke="none" />
              </svg>
            </button>
          </PanelTools>
          <ThumbArea>
            <ThumbList ref={listRef}>
              {thumbs.map(({ n, art }) => (
                <ThumbItem key={n}>
                  <ThumbFrame type="button" aria-label={`Go to page ${n}`} $selected={n === 7}>
                    <Paper viewBox="0 0 250 354">{art}</Paper>
                  </ThumbFrame>
                  <ThumbLabel>{n}</ThumbLabel>
                </ThumbItem>
              ))}
            </ThumbList>
            <ScrollBar>
              <ScrollArrow type="button" aria-label="Scroll up">
                <svg width="9" height="7" fill="none" stroke="#444" strokeWidth="2"><path d="m1 6 3.500-4L8 6" /></svg>
              </ScrollArrow>
              <ScrollTrack><ScrollThumb /></ScrollTrack>
              <ScrollArrow type="button" aria-label="Scroll down">
                <svg width="9" height="7" fill="none" stroke="#444" strokeWidth="2"><path d="m1 1 3.500 4L8 1" /></svg>
              </ScrollArrow>
            </ScrollBar>
          </ThumbArea>
        </SidePanel>

        <Splitter>
          <svg width="4" height="48" stroke="#bbb">
            <path d="M.5 0v48M3.500 0v48" strokeDasharray="1 1" />
          </svg>
        </Splitter>

        <Reader ref={readerRef}>
          <Sheet>
            <Paragraph>items.</Paragraph>
            <Heading>PRODUCT IDENTIFICATION NUMBER (PIN)/MACHINE SERIAL NO. PLATE</Heading>
            <Paragraph>On the inside of the L.H. armrest.</Paragraph>
            <Paragraph>The design of the nameplate differs according to the territory.</Paragraph>
            <Figure $tone="#777"><SeatFigure /></Figure>
            <Heading>ENGINE SERIAL NO. PLATE POSITION</Heading>
            <Paragraph>On the upper side of the engine cylinder head cover.</Paragraph>
            <Figure $tone="#000"><EngineFigure /></Figure>
          </Sheet>
        </Reader>
      </Workspace>
    </Window>
  );
}
